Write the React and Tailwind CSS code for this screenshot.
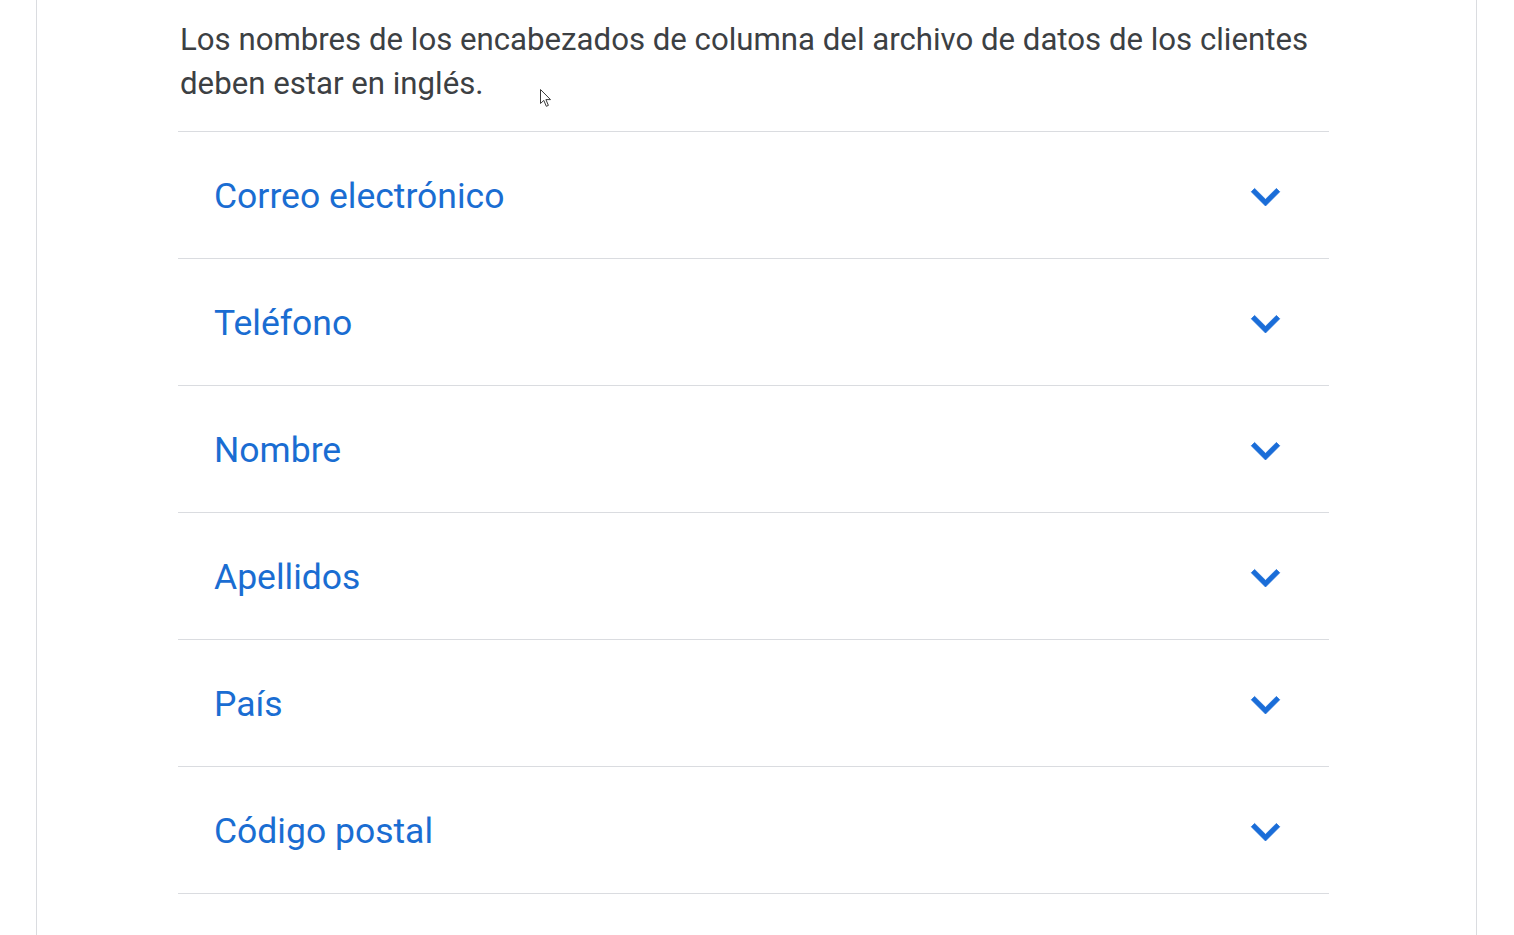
import React from "react";

const fields = [
  "Correo electrónico",
  "Teléfono",
  "Nombre",
  "Apellidos",
  "País",
  "Código postal",
];

function ExpandMore() {
  return (
    <svg viewBox="0 0 24 24" className="w-[57px] h-[57px] shrink-0 mt-[3px]" fill="#1a6dd8" aria-hidden="true">
      <path d="M16.59 8.59L12 13.17 7.41 8.59 6 10l6 6 6-6z" stroke="#1a6dd8" strokeWidth="0.3" strokeLinejoin="miter" />
    </svg>
  );
}

function Pointer() {
  return (
    <svg
      viewBox="0 0 12 19"
      className="absolute left-[540px] top-[89px] w-[12px] h-[19px] pointer-events-none"
      aria-hidden="true"
    >
      <path
        d="M0.5 0.5 L0.5 14.5 L3.8 11.4 L6.3 17.3 L8.4 16.4 L5.9 10.6 L10.5 10.6 Z"
        fill="#ffffff"
        stroke="#3a3a3a"
        strokeWidth="1"
        strokeLinejoin="round"
      />
    </svg>
  );
}

export default function App() {
  return (
    <div className="relative min-h-[935px] bg-white" style={{ fontFamily: "Roboto, 'Noto Sans', Arial, sans-serif" }}>
      <div className="ml-[36px] w-[1441px] min-h-[935px] border-x border-[#dadce0] bg-white">
        <div className="ml-[141px] w-[1151px] pt-[18px]">
          <p className="pl-[2px] text-[31.2px] leading-[44px] text-[#3c4043] mb-[25px]">
            Los nombres de los encabezados de columna del archivo de datos de los clientes deben estar en inglés.
          </p>
          <div className="border-b border-[#dadce0]">
            {fields.map((f) => (
              <div
                key={f}
                className="flex items-center justify-between h-[127px] border-t border-[#dadce0] pl-[36px] pr-[35px]"
              >
                <span className="text-[35.5px] leading-[48px] mt-[2px] text-[#1a6dd2]">{f}</span>
                <ExpandMore />
              </div>
            ))}
          </div>
        </div>
      </div>
      <Pointer />
    </div>
  );
}
